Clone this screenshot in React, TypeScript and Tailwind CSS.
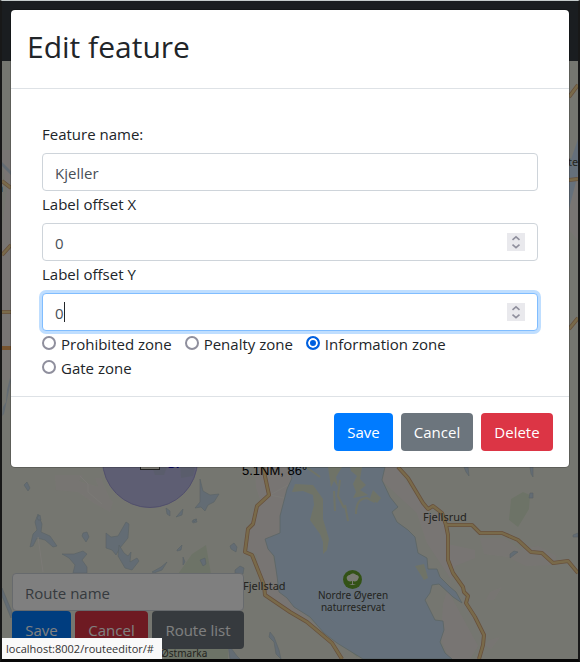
import { useState } from "react";
import type { ReactNode } from "react";

const ZONES = ["Prohibited zone", "Penalty zone", "Information zone", "Gate zone"];

const PONDS = [
  "M200 479l3 12 7 4 9-1-5 8-6 3-3 6-4-4-6 1 5-6z",
  "M166 508l4 3 0 5-3-2zM177 516l6-7-1 6-6 2zM192 521l4-2 1 3-4 1z",
  "M38 514l4 10-1 8 9 4 7 10-4 1-8-7-8-2-4 8-3 1 3-13 4-4-2-8z",
  "M83 533l4-1 2 5-3 5-4-6zM106 533l5 4 7-1 8-14 3 2-1 14-8 10-4 7-4-5-6-2z",
  "M119 545l5 8 4 3 3-4-1 10 7-4 2 3-7 9-7-2-7-12z",
  "M62 554l12 0 9-3 4 3-5 6 5 7 0 6-14 0 2-8-6-7z",
  "M177 550l5-5-1 5-4 1zM230 546l4-3 3 4-1 5-5-3zM152 572l9-5 6-5-5 8-8 3z",
  "M183 557l2 5-2 3zM200 560l5-2 1 6-3 2zM235 570l5-4 4 2-1 6-8-1z",
  "M270 632l4 5 5 13 2 9-5-5-2-12-5-5zM193 520l4-1-3 3z",
  "M24 485l3-3 3 6-2 3zM37 517l3-2 1 5-3 0zM2 588l10 24-1 6-9-22z",
  "M228 644l9 12 3 3-10 0zM22 592l10 18 8 16-3 2z",
  "M464 467l4 0 1 9-3-4zM530 467l3 0 0 10-2-3zM530 493l3 0 0 5-4 0z",
  "M510 554l4-3 4 1-8 6zM573 535l5-2 0 4-5 0z",
];

const ROADS = [
  "M263 467l6 28-12 11-4 18-5 5-3 23 7 3 12 30 1 10 25 17 17 10 25 21 10 16",
  "M398 467l10 11 15 25 5 6 5-3 9 7 4 12 26 0 8 8 22 0 16 7 13 12 11 1 11 10 15-2 10 12",
  "M446 525l2 10 0 25 5 13 10 14 1 5 4 4-2 7 9 14 9 18-1 10-4 14",
  "M2 181l9 7M2 255l9-10M2 312l9 0M569 97l9-12M569 180l9-1M569 329l9-11",
];

function TerrainMap() {
  return (
    <svg
      className="absolute inset-0 h-full w-full"
      viewBox="2 61 576 598"
      preserveAspectRatio="xMidYMid slice"
      aria-hidden="true"
    >
      <rect x="2" y="61" width="576" height="598" fill="#ebece0" />
      {/* built-up areas */}
      <g fill="#f1ebe7">
        <path d="M2 150h12l-2 150 2 80H2V230l5-40-5-30zM569 170h9v70l-9-10z" />
        <path d="M55 475h28l-4 6 20 6 14 15-3 10-18-10-14-10-22-2zM95 478h6l11 26-8-2z" opacity=".7" />
        <path d="M255 467h40v30l-10 42-16 5 10 35 12 22 25 25-32-15-24-24-3-32-12-8 8-35 8-10-5-15z" />
        <path d="M382 467h14l14 20 20 27 15 0 2 30 28 6 0 8-20 8-7 25 30 55-8 13-21 0-8-20 2-35 8-25-24-36-10-30-38-35z" />
        <path d="M480 538l25 0 15 12 18-4 18 10 0 9-30 1-18-9-24-3zM490 592l12-5-8 13-8 0zM490 640l10-3-9 12-6-4z" opacity=".6" />
      </g>
      {/* woodland */}
      <g fill="#dae7ce">
        <path d="M178 574l14-20 14-9 5 29zM190 638h38v21h-64v-14zM511 499l12-7 7 3-1 14-6 10-5 8-9-7zM335 638l30 10-8 9z" />
      </g>
      {/* lake */}
      <path
        fill="#cae1f6"
        stroke="#b2c6c4"
        strokeWidth=".7"
        d="M287 467h98l-3 13 8 17 8 10-6 5 5 10 11 8 7 7 3 16 9 5 1 11 9 0 3 8 10 10 6 5 6 11-9-6-14-13-7 1-2 8-5 7 5 10 5 10 8 1 1 9-4 12 5 11 7 6h-89l-26-16-13-10-14-16-16-10-7-9-8-6-2-16-3-20-6-7-3-10 15-6 0-17 7-27 5-11z"
      />
      <path
        fill="#dfe7cf"
        d="M295 484l18 1 10 14 0 20 6 20-2 11-4 4 0-12-3-8-10-14 4-15-1-10-10-4-11 1zM328 467h14l-6 10 2 10-4-6-3 6zM350 467h12l-2 12 6 6-6 5 8 5-15 3 3-6-3-8 4-8-6-5zM373 490l8 8-4 5-7-5zM415 566l9-2 4 14-4 2z"
      />
      <path
        fill="none"
        stroke="#dfe7cf"
        strokeWidth="2"
        d="M306 467l14 10M356 514q0-16 11-16l8 4M345 505l3 16M334 491l1 20M340 480l-2 16 6 12"
      />
      <path fill="#cae1f6" d="M569 165l9-26v35l-9 35z" />
      <path fill="#c6d8e6" d="M2 162l9 9v4l-9-9zM7 390l3-12 1 3-7 33-2 2 1-9 3-5z" />
      {PONDS.map((d) => (
        <path key={d} d={d} fill="#c6d8e8" stroke="#b2c4ca" strokeWidth=".6" />
      ))}
      <g fill="none" strokeLinejoin="round">
        <path
          d="M80 476l8 8 0 8 14 12M270 495l18-10M270 495l14 3M38 537l5 35"
          stroke="#f6f3ec"
          strokeWidth="1"
        />
        {ROADS.map((d) => (
          <path key={d} d={d} stroke="#cfa27a" strokeWidth="4" />
        ))}
        {ROADS.map((d) => (
          <path key={d} d={d} stroke="#f3d594" strokeWidth="2.4" />
        ))}
        <path d="M2 348h9" stroke="#efa95c" strokeWidth="4" />
      </g>
      {/* control zone */}
      <circle cx="150" cy="460" r="47.500" fill="#bdbce6" stroke="#a29fd8" />
      <path d="M152 467h15l-3 8h-9zM180 462h16l-3 14-12 2z" fill="#b5bbd9" />
      <rect x="140.500" y="452.500" width="19" height="17" fill="#eceade" stroke="#444" />
      <g fontFamily="Noto Sans, sans-serif" fontSize="11" fill="#484840">
        <text x="423" y="521">Fjellsrud</text>
        <text x="243" y="590">Fjellstad</text>
        <text x="-3" y="192">a</text>
        <text x="568" y="166">ter</text>
        <g fontSize="10">
          <text x="161" y="657">Østmarka</text>
          <text x="353" y="599" textAnchor="middle">Nordre Øyeren</text>
          <text x="353" y="611" textAnchor="middle">naturreservat</text>
        </g>
      </g>
      <g fontFamily="Liberation Sans, sans-serif" fontSize="13">
        <text x="242" y="475" fill="#000">5.1NM, 86°</text>
        <text x="167" y="468" fill="#00c" fontWeight="bold">SP</text>
      </g>
      <circle cx="352.500" cy="579.500" r="9.500" fill="#66a52d" />
      <path
        fill="#f1f4e4"
        d="M347 579c-1-2 1-4 3-4 1-2 5-2 6 0 2 0 4 2 2 4 0 2-3 3-5 2v3l3 1h-7l3-1v-3c-2 1-5 0-5-2z"
      />
    </svg>
  );
}

function Stepper() {
  return (
    <svg className="size-[18px] shrink-0 bg-[#e9e9ed]" viewBox="0 0 18 18" fill="none" stroke="#8f8f9d" strokeWidth="1.6" aria-hidden="true">
      <path d="M5.500 6.800 9 3.800l3.500 3M5.500 11.700l3.500 3 3.500-3" />
    </svg>
  );
}

function NumberField({ id, label, active = false }: { id: string; label: string; active?: boolean }) {
  const [value, setValue] = useState("0");
  return (
    <>
      <label htmlFor={id} className="mb-[7px] block pt-px">
        {label}
      </label>
      <div
        className={`relative flex h-[38px] items-center rounded border bg-white px-3 ${
          active ? "border-[#80bdff] ring-3 ring-[#bfdeff]" : "border-[#ced4da]"
        }`}
      >
        <input
          id={id}
          type="number"
          value={value}
          onChange={(e) => setValue(e.target.value)}
          className="min-w-0 flex-1 appearance-none bg-transparent pt-0.5 text-[#495057] caret-transparent outline-none [appearance:textfield] [&::-webkit-inner-spin-button]:appearance-none"
        />
        {active && <span className="absolute top-2 left-[21px] h-5 w-px bg-[#212529]" />}
        <Stepper />
      </div>
    </>
  );
}

function Button({ tone, children }: { tone: string; children: ReactNode }) {
  return (
    <button type="button" className={`h-[38px] rounded text-white ${tone}`}>
      {children}
    </button>
  );
}

export default function App() {
  const [zone, setZone] = useState("Information zone");
  return (
    <div className="relative flex min-h-screen flex-col border-x-2 border-t border-b-3 border-x-[#181818] border-t-[#c5cbcb] border-b-[#080808] font-['Open_Sans',sans-serif] text-[15px] leading-6 text-[#212529]">
      <header className="h-[60px] bg-[#343a40]" />
      <main className="relative flex flex-1 flex-col items-start justify-end overflow-hidden p-[10px]">
        <TerrainMap />
        <form className="relative w-[232px]">
          <input
            aria-label="Route name"
            placeholder="Route name"
            className="block h-[38px] w-full rounded border border-[#ced4da] bg-white px-3 pt-0.5 placeholder:text-[#6c757d]"
          />
          <div className="flex justify-between gap-1">
            <Button tone="bg-[#007bff] w-[59px]">Save</Button>
            <Button tone="bg-[#dc3545] w-[73px]">Cancel</Button>
            <Button tone="bg-[#6c757d] w-[92px] whitespace-nowrap">Route list</Button>
          </div>
        </form>
      </main>

      <div className="absolute inset-0 bg-black/50 p-[9px]">
        <div role="dialog" aria-labelledby="dialog-title" className="rounded bg-white shadow-[0_0_0_1px_rgba(0,0,0,0.2)]">
          <div className="border-b border-[#dee2e6] px-4 pt-[18px] pb-[22px]">
            <h2 id="dialog-title" className="text-[30px] leading-[38px]">
              Edit feature
            </h2>
          </div>
          <div className="px-[31px] pt-8 pb-4">
            <label htmlFor="feature-name" className="mb-[7px] block pt-px">
              Feature name:
            </label>
            <input
              id="feature-name"
              defaultValue="Kjeller"
              className="block h-[38px] w-full rounded border border-[#ced4da] bg-white px-3 pt-0.5 text-[#495057] outline-none"
            />
            <NumberField id="offset-x" label="Label offset X" />
            <NumberField id="offset-y" label="Label offset Y" active />
            <div className="flex flex-wrap gap-x-[13px] pt-px">
              {ZONES.map((name) => (
                <label key={name} className="flex items-center gap-[5px]">
                  <input
                    type="radio"
                    name="zone"
                    checked={zone === name}
                    onChange={() => setZone(name)}
                    className="mb-0.5 size-[14px] appearance-none rounded-full border-2 border-[#8f8f9d] bg-white checked:border-[#0060df] checked:bg-[#0060df] checked:shadow-[inset_0_0_0_2px_white]"
                  />
                  {name}
                </label>
              ))}
            </div>
          </div>
          <div className="flex justify-end gap-2 border-t border-[#dee2e6] p-4">
            <Button tone="bg-[#007bff] w-[59px]">Save</Button>
            <Button tone="bg-[#6c757d] w-[72px]">Cancel</Button>
            <Button tone="bg-[#dc3545] w-[72px]">Delete</Button>
          </div>
        </div>
      </div>

      <div className="absolute bottom-0 left-0 h-[21px] w-40 bg-[#f9f9f9] px-1 text-[11px] leading-[22px] whitespace-nowrap text-[#333]">
        localhost:8002/routeeditor/#
      </div>
    </div>
  );
}
